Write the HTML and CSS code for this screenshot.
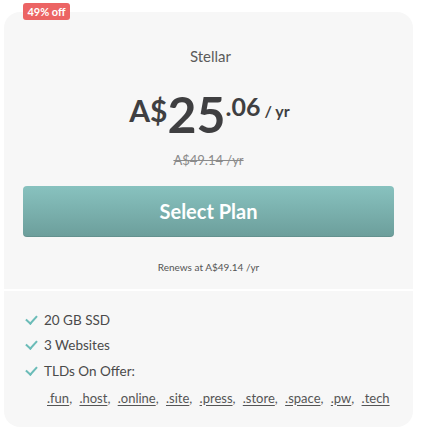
FILE: index.html
```html
<!DOCTYPE html>
<html lang="en">
<head>
    <meta charset="UTF-8">
    <meta name="viewport" content="width=device-width, initial-scale=1.0">
    <title>Stellar plan</title>
    <link rel="stylesheet" href="styles.css">
</head>
<body>
    <div class="plan">
        <span class="badge">49% off</span>

        <!-- price part -->
        <div class="plan-top">
            <div class="plan-name">Stellar</div>
            <div class="price">
                <span class="cur">A$</span><span class="whole">25</span><span class="cents">.06</span><span class="term">/ yr</span>
            </div>
            <div class="old-price">A$49.14 /yr</div>
            <a class="select-btn" href="#">Select Plan</a>
            <div class="renews">Renews at A$49.14 /yr</div>
        </div>

        <!-- features -->
        <ul class="features">
            <li><span class="tick"></span>20 GB SSD</li>
            <li><span class="tick"></span>3 Websites</li>
            <li><span class="tick"></span>TLDs On Offer:</li>
        </ul>
        <div class="tlds">
            <a href="#">.fun</a>, <a href="#">.host</a>, <a href="#">.online</a>, <a href="#">.site</a>, <a href="#">.press</a>, <a href="#">.store</a>, <a href="#">.space</a>, <a href="#">.pw</a>, <a href="#">.tech</a>
        </div>
    </div>
</body>
</html>
```

FILE: styles.css
```css
*{
    margin: 0;
    padding: 0;
    list-style: none;
    box-sizing: border-box;
}

body{
    background: #fff;
    font-family: Lato, "Open Sans", sans-serif;
    color: #555;
}

.plan{
    position: relative;
    width: 409px;
    height: 415px;
    margin: 12px 0 0 4px;
    background: #f7f7f7;
    border-radius: 16px;
}

.badge{
    position: absolute;
    left: 19px;
    top: -9px;
    width: 47px;
    height: 17px;
    line-height: 17px;
    text-align: center;
    background: #ec6464;
    color: #fff;
    font-size: 11px;
    font-weight: 700;
    border-radius: 3px;
}

.plan-top{
    padding: 35px 19px 0;
    height: 279px;
    border-bottom: 2px solid #fff;
    text-align: center;
}

.plan-name{
    font-size: 15px;
    line-height: 18px;
    color: #5b5b5b;
    margin-left: 4px;
}

.price{
    display: flex;
    justify-content: center;
    align-items: flex-start;
    color: #3f3f41;
    font-weight: 700;
    margin-top: 24px;
    height: 48px;
    margin-left: 2px;
}

.cur{
    font-size: 30px;
    line-height: 30px;
    margin-top: 6px;
}

.whole{
    font-size: 50px;
    line-height: 50px;
}

.cents{
    font-size: 25px;
    line-height: 25px;
    margin-top: 5px;
}

.term{
    font-size: 16px;
    line-height: 16px;
    margin-top: 14px;
    margin-left: 4px;
}

.old-price{
    margin-top: 15px;
    font-size: 13px;
    line-height: 16px;
    color: #8a8a8a;
    text-decoration: line-through;
}

.select-btn{
    display: block;
    margin-top: 18px;
    height: 51px;
    line-height: 51px;
    border-radius: 4px;
    background: linear-gradient(#88c2bf, #6c9e9b);
    color: #fff;
    font-size: 20px;
    font-weight: 700;
    text-decoration: none;
    box-shadow: inset 0 -1px 0 rgba(0,0,0,0.08);
}

.renews{
    margin-top: 24px;
    font-size: 10px;
    line-height: 12px;
    color: #555;
}

.features{
    padding: 16px 0 0 21px;
}

.features li{
    display: flex;
    align-items: center;
    height: 25.5px;
    font-size: 13.5px;
    color: #4a4a4a;
}

.tick{
    width: 11px;
    height: 7px;
    border-left: 2px solid #6bbcb8;
    border-bottom: 2px solid #6bbcb8;
    transform: rotate(-48deg);
    margin: -3px 7px 0 1px;
}

.tlds{
    padding: 6px 0 0 43px;
    font-size: 13px;
    color: #555;
    word-spacing: 4px;
}

.tlds a{
    color: #555;
    text-decoration: underline;
    text-underline-offset: 2px;
    word-spacing: 0;
}
```
